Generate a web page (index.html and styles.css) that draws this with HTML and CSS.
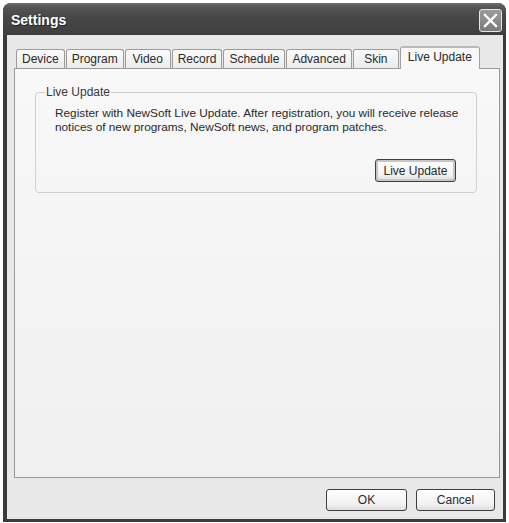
FILE: index.html
```html
<!DOCTYPE html>
<html>
<head>
<meta charset="utf-8">
<title>Settings</title>
<link rel="stylesheet" href="styles.css">
</head>
<body>
<div class="window">
  <div class="titlebar">
    <span class="title">Settings</span>
    <button class="close" aria-label="Close">
      <svg width="15" height="15" viewBox="0 0 15 15"><path d="M2 2 L13 13 M13 2 L2 13" stroke="#fff" stroke-width="2.4" stroke-linecap="square"/></svg>
    </button>
  </div>
  <div class="client">
    <div class="tabs">
      <div class="tab">Device</div>
      <div class="tab">Program</div>
      <div class="tab">Video</div>
      <div class="tab">Record</div>
      <div class="tab">Schedule</div>
      <div class="tab">Advanced</div>
      <div class="tab">Skin</div>
      <div class="tab active">Live Update</div>
    </div>
    <div class="panel">
      <fieldset class="group">
        <legend>Live Update</legend>
        <p class="desc">Register with NewSoft Live Update. After registration, you will receive release<br>notices of new programs, NewSoft news, and program patches.</p>
        <div class="group-actions">
          <button class="btn btn-default">Live Update</button>
        </div>
      </fieldset>
    </div>
    <div class="footer">
      <button class="btn btn-ok">OK</button>
      <button class="btn btn-cancel">Cancel</button>
    </div>
  </div>
</div>
</body>
</html>
```
FILE: styles.css
```css
html, body {
  margin: 0;
  padding: 0;
  background: #ffffff;
}
body {
  font-family: "Liberation Sans", Arial, sans-serif;
  font-size: 12px;
  color: #2a2a2a;
}
.window {
  width: 503px;
  height: 519px;
  margin: 3px 0 0 3px;
  background: #3b3b3b;
  border-radius: 8px 8px 0 0;
  display: flex;
  flex-direction: column;
  box-sizing: border-box;
}
.titlebar {
  height: 32px;
  flex: none;
  display: flex;
  align-items: center;
  justify-content: space-between;
  padding: 0 4px 0 8px;
  border-radius: 8px 8px 0 0;
  background: linear-gradient(#707070 0px, #555555 4px, #474747 14px, #3e3e3e 100%);
}
.title {
  color: #ffffff;
  font-weight: bold;
  font-size: 14px;
  text-shadow: 1px 1px 0 #222;
  margin-top: 2px;
}
.close {
  width: 23px;
  height: 23px;
  margin-top: 3px;
  padding: 0;
  border: 1px solid #e6e6e6;
  border-radius: 3px;
  background: linear-gradient(#9a9a9a, #7a7a7a);
  display: flex;
  align-items: center;
  justify-content: center;
}
.client {
  flex: 1;
  margin: 0 3px 3px 4px;
  background: #e8e8e8;
  display: flex;
  flex-direction: column;
  padding-top: 10px;
}
.tabs {
  display: flex;
  align-items: flex-end;
  padding-left: 9px;
  gap: 1px;
  height: 23px;
  position: relative;
  z-index: 1;
}
.tab {
  box-sizing: border-box;
  min-width: 46px;
  text-align: center;
  height: 19px;
  line-height: 18px;
  padding: 0 5px;
  border: 1px solid #9c9c9c;
  border-bottom: none;
  border-radius: 3px 3px 0 0;
  background: linear-gradient(#fafafa, #ececec);
  color: #2a2a2a;
  white-space: nowrap;
}
.tab.active {
  height: 23px;
  line-height: 19px;
  padding: 0 7px 0 7px;
  margin-bottom: -1px;
  background: #f8f8f8;
  border-color: #a0a0a0;
  border-top: 2px solid #b9b9b9;
}
.panel {
  margin: 0 3px 0 7px;
  height: 410px;
  box-sizing: border-box;
  border: 1px solid #999999;
  background: linear-gradient(#f8f8f8, #f0f0f0);
  padding: 16px 0 0 20px;
}
.group {
  width: 442px;
  min-width: 0;
  box-sizing: border-box;
  margin: 0;
  border: 1px solid #d0d0d0;
  border-radius: 4px;
  padding: 0 20px 10px 19px;
}
.group legend {
  margin-left: -10px;
  padding: 0 1px;
  line-height: 14px;
  color: #3a3a3a;
}
.desc {
  margin: 7px 0 0 0;
  font-size: 11.8px;
  line-height: 14px;
  white-space: nowrap;
  color: #2a2a2a;
}
.group-actions {
  display: flex;
  justify-content: flex-end;
  margin-top: 25px;
}
.btn {
  font-family: "Liberation Sans", Arial, sans-serif;
  font-size: 12px;
  color: #2a2a2a;
  height: 22px;
  padding: 0;
  border: 1px solid #3f3f3f;
  border-radius: 3px;
  background: linear-gradient(#ffffff, #f2f2f2 70%, #dcdcdc);
}
.btn-default {
  width: 81px;
  height: 23px;
  box-shadow: inset 0 0 0 2px #c6c6c6;
}
.footer {
  display: flex;
  justify-content: flex-end;
  gap: 9px;
  padding: 11px 8px 0 0;
}
.btn-ok {
  width: 81px;
}
.btn-cancel {
  width: 79px;
}
```
